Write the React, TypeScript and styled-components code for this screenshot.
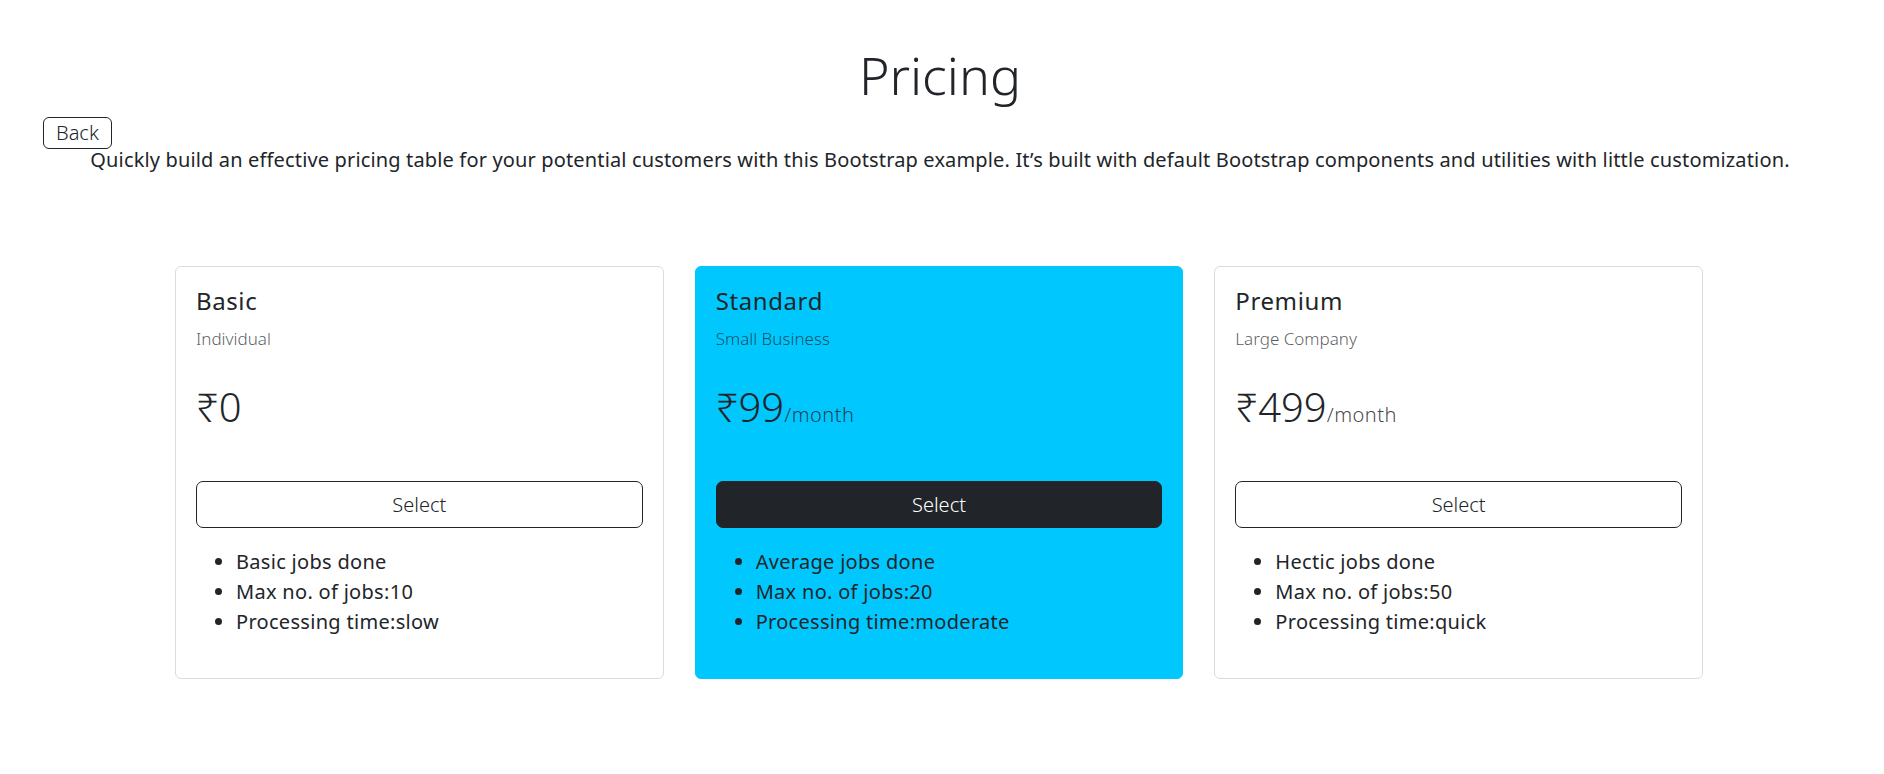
import React from "react";
import styled, { createGlobalStyle } from "styled-components";

const GlobalStyle = createGlobalStyle`
  body {
    margin: 0;
    background: #ffffff;
    color: #212529;
    font-family: "Century Gothic", "Noto Sans", "DejaVu Sans", sans-serif;
  }
`;

const Page = styled.div`
  min-height: 100vh;
  overflow: hidden;
`;

const Header = styled.header`
  display: flex;
  flex-direction: column;
  padding-right: 4px;
`;

const Title = styled.h1`
  margin: 44px 0 0;
  font-size: 52px;
  font-weight: 300;
  line-height: 1.2;
  text-align: center;
  color: #212529;
`;

const BackButton = styled.button`
  align-self: flex-start;
  margin: 11px 0 0 43px;
  height: 32px;
  padding: 0 12px;
  border: 1px solid #212529;
  border-radius: 6px;
  background: #ffffff;
  color: #212529;
  font-family: inherit;
  font-size: 20px;
  font-weight: 300;
  line-height: 30px;
  cursor: pointer;
`;

const Lead = styled.p`
  margin: -1px 0 0;
  font-size: 20px;
  line-height: 24px;
  letter-spacing: 0.15px;
  text-align: center;
  color: #212529;
`;

const CardRow = styled.main`
  display: grid;
  grid-template-columns: repeat(3, 1fr);
  gap: 31px;
  width: 1528px;
  margin: 94px 0 0 calc(50% - 767px);
`;

const Card = styled.section<{ $featured?: boolean }>`
  display: flex;
  flex-direction: column;
  padding: 20px;
  border: 1px solid ${({ $featured }) => ($featured ? "#00c8ff" : "#d9dcdf")};
  border-radius: 6px;
  background: ${({ $featured }) => ($featured ? "#00c8ff" : "#ffffff")};
`;

const PlanName = styled.h4`
  margin: 0;
  font-size: 24px;
  font-weight: 400;
  line-height: 1.2;
  letter-spacing: 0.6px;
`;

const PlanFor = styled.h6`
  margin: 12px 0 0;
  font-size: 17px;
  font-weight: 300;
  line-height: 21.6px;
  color: rgba(33, 37, 41, 0.75);
`;

const Price = styled.h1`
  margin: 33px 0 0;
  height: 48px;
  font-size: 40px;
  font-weight: 300;
  line-height: 48px;
`;

const Per = styled.small`
  font-size: 20px;
  line-height: 1;
  letter-spacing: 0.5px;
  color: rgba(33, 37, 41, 0.85);
`;

const SelectButton = styled.button<{ $solid?: boolean }>`
  margin-top: 50px;
  width: 100%;
  height: 47px;
  border: 1px solid #212529;
  border-radius: 7px;
  background: ${({ $solid }) => ($solid ? "#212529" : "transparent")};
  color: ${({ $solid }) => ($solid ? "#ffffff" : "#212529")};
  font-family: inherit;
  font-size: 20px;
  font-weight: 300;
  cursor: pointer;
`;

const Features = styled.ul`
  margin: 19px 0 21px;
  padding-left: 40px;
  font-size: 20px;
  font-weight: 400;
  line-height: 30px;
  letter-spacing: 0.3px;
`;

type Plan = {
  name: string;
  audience: string;
  price: number;
  monthly: boolean;
  features: string[];
  featured?: boolean;
};

const plans: Plan[] = [
  {
    name: "Basic",
    audience: "Individual",
    price: 0,
    monthly: false,
    features: ["Basic jobs done", "Max no. of jobs:10", "Processing time:slow"],
  },
  {
    name: "Standard",
    audience: "Small Business",
    price: 99,
    monthly: true,
    featured: true,
    features: ["Average jobs done", "Max no. of jobs:20", "Processing time:moderate"],
  },
  {
    name: "Premium",
    audience: "Large Company",
    price: 499,
    monthly: true,
    features: ["Hectic jobs done", "Max no. of jobs:50", "Processing time:quick"],
  },
];

export default function App() {
  return (
    <Page>
      <GlobalStyle />
      <Header>
        <Title>Pricing</Title>
        <BackButton>Back</BackButton>
        <Lead>
          Quickly build an effective pricing table for your potential customers with this
          Bootstrap example. It’s built with default Bootstrap components and utilities with
          little customization.
        </Lead>
      </Header>
      <CardRow>
        {plans.map((plan) => (
          <Card key={plan.name} $featured={plan.featured}>
            <PlanName>{plan.name}</PlanName>
            <PlanFor>{plan.audience}</PlanFor>
            <Price>
              ₹{plan.price}
              {plan.monthly && <Per>/month</Per>}
            </Price>
            <SelectButton $solid={plan.featured}>Select</SelectButton>
            <Features>
              {plan.features.map((f) => (
                <li key={f}>{f}</li>
              ))}
            </Features>
          </Card>
        ))}
      </CardRow>
    </Page>
  );
}
